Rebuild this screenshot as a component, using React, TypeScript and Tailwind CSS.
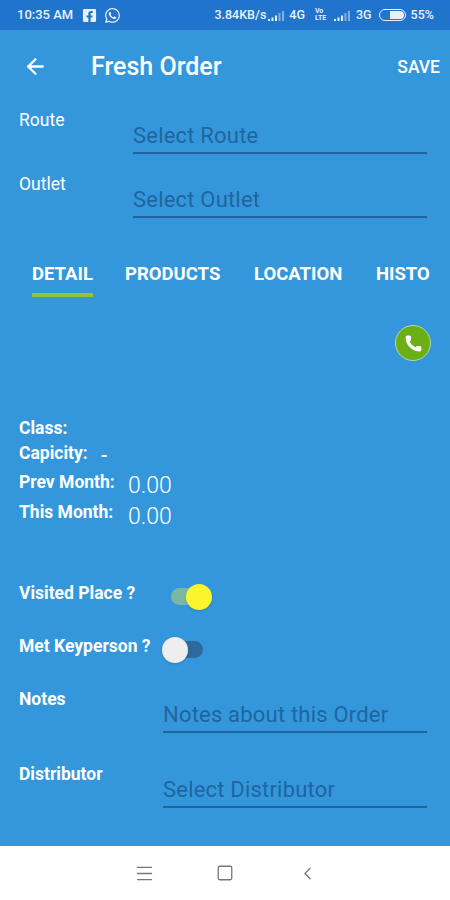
import { ArrowLeft, ChevronLeft, Menu, Phone, Square } from 'lucide-react';
import { FaFacebookSquare, FaWhatsapp } from 'react-icons/fa';

const Signal = () => (
    <svg width="17" height="12" viewBox="0 0 17 12" className="mt-[1px]">
        <rect x="0" y="9" width="2" height="2" fill="#e8f1fb" />
        <rect x="3.5" y="7.5" width="2" height="3.5" fill="#e8f1fb" />
        <rect x="7" y="5.5" width="2" height="5.5" fill="#e8f1fb" />
        <rect x="10.5" y="3" width="2" height="8" fill="#7fb0e4" />
        <rect x="14" y="1" width="2" height="10" fill="#7fb0e4" />
    </svg>
);

function Field({ label, placeholder, inputClass, labelClass, className }: { label: string; placeholder: string; inputClass: string; labelClass: string; className: string }) {
    return (
        <div className={`flex items-start pl-[19px] pr-[23px] ${className}`}>
            <span className={`text-white leading-[20px] ${labelClass}`}>{label}</span>
            <div className={`border-b-2 border-[#22649c] h-[36px] leading-[36px] text-[22px] tracking-[0.2px] text-[#1f659f] ${inputClass}`}>{placeholder}</div>
        </div>
    );
}

function Stat({ label, value, className, valueClass }: { label: string; value: string; className: string; valueClass: string }) {
    return (
        <div className={`flex items-start pl-[19px] ${className}`}>
            <span className="w-[109px] text-[17.5px] font-bold leading-[20px] text-white">{label}</span>
            <span className={`text-[23px] font-light leading-[26px] text-white ${valueClass}`}>{value}</span>
        </div>
    );
}

export default function App() {
    return (
        <main className="flex h-[900px] w-[450px] flex-col overflow-hidden bg-[#3497db] font-['Roboto','Liberation_Sans',sans-serif]">
            {/* status bar */}
            <div className="flex h-[30px] shrink-0 items-center bg-[#2074cc] pl-[17px] pr-[16px] text-[#e8f1fb]">
                <span className="text-[13px] font-medium">10:35 AM</span>
                <FaFacebookSquare className="ml-[9px] text-[15px]" />
                <FaWhatsapp className="ml-[7px] text-[17px]" />
                <span className="ml-auto text-[12.5px] font-medium">3.84KB/s</span>
                <span className="ml-[2px]"><Signal /></span>
                <span className="ml-[4px] text-[12.5px] font-medium">4G</span>
                <span className="ml-[10px] w-[13px] text-[7px] font-bold leading-[7px]">Vo<br />LTE</span>
                <span className="ml-[6px]"><Signal /></span>
                <span className="ml-[5px] text-[12.5px] font-medium">3G</span>
                <div className="ml-[7px] flex h-[12px] w-[27px] items-center justify-end rounded-full border border-[#e8f1fb] p-[1px]">
                    <div className="h-[8px] w-[14px] rounded-r-full bg-[#e8f1fb]" />
                </div>
                <span className="ml-[5px] text-[12.5px] font-medium">55%</span>
            </div>

            {/* app bar */}
            <div className="flex h-[72px] shrink-0 items-center pl-[23px] pr-[10px] text-white">
                <ArrowLeft size={25} strokeWidth={2.2} />
                <h1 className="ml-[43px] mt-[2px] text-[25px] font-medium">Fresh Order</h1>
                <span className="ml-auto mt-[2px] text-[17.5px] font-medium">SAVE</span>
            </div>

            <Field label="Route" placeholder="Select Route" labelClass="w-[114px] text-[17.5px] mt-[8px]" inputClass="flex-1 mt-[16px]" className="mt-[0px]" />
            <Field label="Outlet" placeholder="Select Outlet" labelClass="w-[114px] text-[17.5px] mt-[4px]" inputClass="flex-1 mt-[12px]" className="mt-[16px]" />

            {/* tabs */}
            <div className="ml-[32px] mr-[20px] mt-[44px] flex shrink-0 overflow-hidden text-[18.5px] font-bold text-white">
                <div className="w-[93px]">
                    <div className="w-[61px] leading-[24px]">DETAIL</div>
                    <div className="mt-[7px] h-[4px] w-[61px] bg-[#8fc43c]" />
                </div>
                <div className="w-[129px] leading-[24px]">PRODUCTS</div>
                <div className="w-[122px] leading-[24px]">LOCATION</div>
                <div className="leading-[24px]">HISTO</div>
            </div>

            <div className="mr-[19px] mt-[28px] flex shrink-0 justify-end">
                <div className="flex h-[36px] w-[36px] items-center justify-center rounded-full border border-[#b9d9a0] bg-[#6aaf14]">
                    <Phone size={19} fill="white" strokeWidth={0} className="text-white" />
                </div>
            </div>

            <div className="mt-[57px] pl-[19px] text-[17.5px] font-bold leading-[20px] text-white">Class:</div>
            <div className="mt-[5px] flex pl-[19px] text-[17.5px] font-bold leading-[20px] text-white">
                <span>Capicity:</span>
                <span className="ml-[13px] translate-y-[3px]">-</span>
            </div>
            <Stat label="Prev Month:" value="0.00" className="mt-[9px]" valueClass="mt-[1px]" />
            <Stat label="This Month:" value="0.00" className="mt-[3px]" valueClass="mt-[2px]" />

            {/* switches */}
            <div className="mt-[51px] flex h-[30px] items-center pl-[19px]">
                <span className="w-[152px] -translate-y-[3px] text-[17.5px] font-bold text-white">Visited Place ?</span>
                <div className="relative h-[17px] w-[36px] rounded-full bg-[#7ab8a4]">
                    <div className="absolute -top-[4px] left-[15px] h-[26px] w-[26px] rounded-full bg-[#fbf52e] shadow" />
                </div>
            </div>
            <div className="mt-[23px] flex h-[30px] items-center pl-[19px]">
                <span className="w-[150px] -translate-y-[3px] text-[17.5px] font-bold text-white">Met Keyperson ?</span>
                <div className="relative h-[17px] w-[34px] rounded-full bg-[#2d6a9b]">
                    <div className="absolute -left-[7px] -top-[4px] h-[26px] w-[26px] rounded-full bg-[#eeeeee] shadow" />
                </div>
            </div>

            <Field label="Notes" placeholder="Notes about this Order" labelClass="w-[144px] text-[17.5px] font-bold" inputClass="flex-1 mt-[8px]" className="mt-[25px]" />
            <Field label="Distributor" placeholder="Select Distributor" labelClass="w-[144px] text-[17.5px] font-bold" inputClass="flex-1 mt-[8px]" className="mt-[31px]" />

            {/* nav bar */}
            <div className="mt-auto flex h-[54px] shrink-0 items-center bg-white pl-[134px] text-[#777777]">
                <Menu size={21} strokeWidth={1.5} />
                <Square size={18} strokeWidth={1.7} className="ml-[61px]" />
                <ChevronLeft size={21} strokeWidth={1.5} className="ml-[63px]" />
            </div>
        </main>
    );
}
